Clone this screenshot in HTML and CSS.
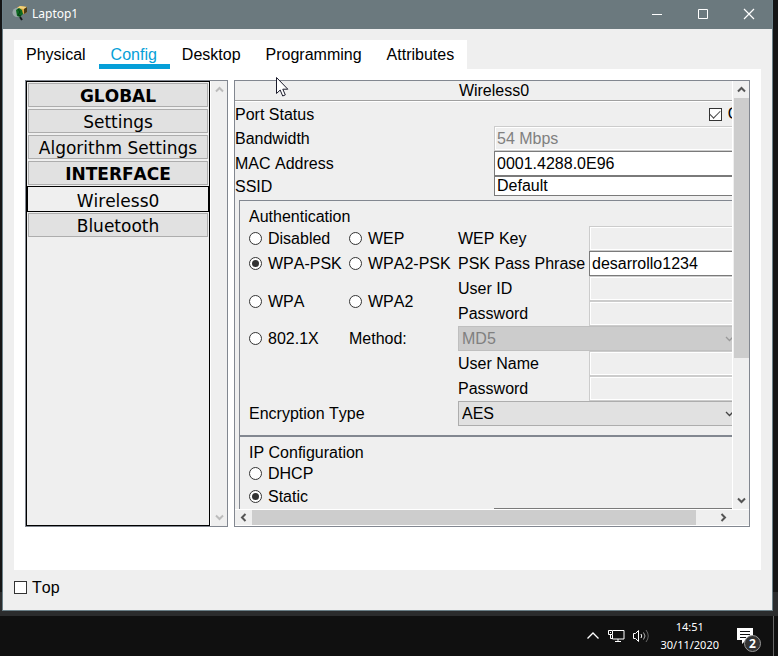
FILE: index.html
```html
<!DOCTYPE html>
<html lang="en">
<head>
<meta charset="utf-8">
<title>Laptop1</title>
<link rel="stylesheet" href="styles.css">
</head>
<body>
<div class="desktop">
  <div class="window">
    <header class="titlebar">
      <svg class="app-icon" width="16" height="16" viewBox="0 0 16 16" aria-hidden="true">
        <path d="M5 2l3-2 7 1v5l-3 2-5-2z" fill="#d9a441"/>
        <path d="M5 2l3-2 7 1-3 2z" fill="#f3d27c"/>
        <path d="M12 3l3-2v5l-3 2z" fill="#4c3a14"/>
        <circle cx="5" cy="6.500" r="4.500" fill="#9aa9a8"/>
        <path d="M4 4l3-2 3 2 1 4-3 3-3-1z" fill="#0d6a20"/>
        <path d="M6 3l2 3-2 3 3 1" stroke="#063c10" fill="none"/>
        <path d="M8 11l2 3" stroke="#15191a" stroke-width="2"/>
      </svg>
      <h1 class="window-title">Laptop1</h1>
      <div class="window-controls">
        <button type="button" aria-label="Minimize"><svg width="12" height="12" viewBox="0 0 12 12"><path d="M1 6.500h10" stroke="#fff"/></svg></button>
        <button type="button" aria-label="Maximize"><svg width="12" height="12" viewBox="0 0 12 12"><path d="M1.500 1.500h9v9h-9z" stroke="#fff" fill="none"/></svg></button>
        <button type="button" aria-label="Close"><svg width="12" height="12" viewBox="0 0 12 12"><path d="M1 1l10 10M11 1L1 11" stroke="#fff" stroke-width="1.200"/></svg></button>
      </div>
    </header>

    <main class="client">
      <nav class="tabs">
        <a href="#physical">Physical</a>
        <a href="#config" class="active">Config</a>
        <a href="#desktop">Desktop</a>
        <a href="#programming">Programming</a>
        <a href="#attributes">Attributes</a>
      </nav>

      <section class="panel">
        <aside class="sidebar">
          <div class="menu">
            <button type="button" class="heading">GLOBAL</button>
            <button type="button">Settings</button>
            <button type="button">Algorithm Settings</button>
            <button type="button" class="heading">INTERFACE</button>
            <button type="button" class="selected">Wireless0</button>
            <button type="button">Bluetooth</button>
          </div>
          <div class="scroll-y idle">
            <svg width="9" height="7" viewBox="0 0 9 7"><path d="M1 5.500l3.500-3.500 3.500 3.500"/></svg>
            <svg width="9" height="7" viewBox="0 0 9 7"><path d="M1 1.500l3.500 3.500 3.500-3.500"/></svg>
          </div>
        </aside>

        <div class="settings">
          <div class="viewport">
            <form class="form">
              <h2 class="form-title">Wireless0</h2>
              <div class="general">
                <span class="port-label">Port Status</span>
                <label class="option port-on"><input type="checkbox" checked>On</label>
                <label for="bandwidth">Bandwidth</label>
                <input id="bandwidth" type="text" value="54 Mbps" disabled>
                <label for="mac">MAC Address</label>
                <input id="mac" type="text" value="0001.4288.0E96">
                <label for="ssid">SSID</label>
                <input id="ssid" class="short" type="text" value="Default">
              </div>

              <div class="group" role="group" aria-labelledby="auth-title">
                <h3 id="auth-title">Authentication</h3>
                <div class="auth">
                  <label class="option"><input type="radio" name="auth">Disabled</label>
                  <label class="option"><input type="radio" name="auth">WEP</label>
                  <label for="wep-key">WEP Key</label>
                  <input id="wep-key" type="text" disabled>

                  <label class="option"><input type="radio" name="auth" checked>WPA-PSK</label>
                  <label class="option"><input type="radio" name="auth">WPA2-PSK</label>
                  <label for="psk">PSK Pass Phrase</label>
                  <input id="psk" type="text" value="desarrollo1234">

                  <label class="option tall"><input type="radio" name="auth">WPA</label>
                  <label class="option tall"><input type="radio" name="auth">WPA2</label>
                  <label for="user-id">User ID</label>
                  <input id="user-id" type="text" disabled>
                  <label for="user-password">Password</label>
                  <input id="user-password" type="text" disabled>

                  <label class="option"><input type="radio" name="auth">802.1X</label>
                  <label for="method">Method:</label>
                  <div class="combo">
                    <select id="method" disabled><option>MD5</option></select>
                    <svg width="9" height="6" viewBox="0 0 9 6"><path d="M1 1l3.500 3.500 3.500-3.500"/></svg>
                  </div>

                  <label class="third" for="x-name">User Name</label>
                  <input id="x-name" type="text" disabled>
                  <label class="third" for="x-password">Password</label>
                  <input id="x-password" type="text" disabled>

                  <label class="wide" for="encryption">Encryption Type</label>
                  <div class="combo">
                    <select id="encryption"><option>AES</option></select>
                    <svg width="9" height="6" viewBox="0 0 9 6"><path d="M1 1l3.500 3.500 3.500-3.500"/></svg>
                  </div>
                </div>
              </div>

              <div class="group" role="group" aria-labelledby="ip-title">
                <h3 id="ip-title">IP Configuration</h3>
                <div class="ip">
                  <label class="option"><input type="radio" name="ip">DHCP</label>
                  <label class="option"><input type="radio" name="ip" checked>Static</label>
                  <input class="ip-address" type="text" aria-labelledby="ip-title">
                </div>
              </div>
            </form>
          </div>
          <div class="scroll-y">
            <svg width="9" height="7" viewBox="0 0 9 7"><path d="M1 5.500l3.500-3.500 3.500 3.500"/></svg>
            <div class="track"><div class="thumb"></div></div>
            <svg width="9" height="7" viewBox="0 0 9 7"><path d="M1 1.500l3.500 3.500 3.500-3.500"/></svg>
          </div>
          <div class="scroll-x">
            <svg width="7" height="9" viewBox="0 0 7 9"><path d="M5.500 1l-3.500 3.500 3.500 3.500"/></svg>
            <div class="track"><div class="thumb"></div></div>
            <svg width="7" height="9" viewBox="0 0 7 9"><path d="M1.500 1l3.500 3.500-3.500 3.500"/></svg>
          </div>
        </div>
      </section>

      <footer class="bottom">
        <label class="option"><input type="checkbox">Top</label>
      </footer>
    </main>
  </div>
</div>

<footer class="taskbar">
  <svg width="14" height="14" viewBox="0 0 14 14" aria-hidden="true"><path d="M1.500 9.500L7 4l5.500 5.500" stroke="#fff" stroke-width="1.300" fill="none"/></svg>
  <svg width="17" height="14" viewBox="0 0 17 14" aria-hidden="true">
    <path d="M5 1.500h11v8.500H4.500V6M10 10v3M7 12.500h6" stroke="#fff" fill="none"/>
    <path d="M.5 1.500h4v4h-4zM2.500 5.500v4h2M2 3.500h1" stroke="#fff" fill="none"/>
  </svg>
  <svg width="17" height="14" viewBox="0 0 17 14" aria-hidden="true">
    <path d="M.5 4.500h2l3-3v11l-3-3h-2z" stroke="#fff" fill="none"/>
    <path d="M8 5q1.500 2 0 4" stroke="#fff" fill="none"/>
    <path d="M10.500 3.500q3 3.500 0 7" stroke="#aaa" fill="none"/>
    <path d="M13 1q4.500 6 0 12" stroke="#666" fill="none"/>
  </svg>
  <time class="clock" datetime="2020-11-30T14:51"><span>14:51</span><span>30/11/2020</span></time>
  <div class="notifications">
    <svg width="17" height="17" viewBox="0 0 17 17" aria-hidden="true">
      <path d="M0 0h16v12H9l-4 4v-4H0z" fill="#fff"/>
      <path d="M3 3.500h10M3 6.500h10M3 9.500h6" stroke="#101010"/>
    </svg>
    <span class="badge">2</span>
  </div>
</footer>

<svg class="pointer" width="13" height="20" viewBox="0 0 13 20" aria-hidden="true">
  <path d="M.5 .5v16l3.700-3.500 2.500 6 2.600-1.100-2.500-5.700h5z" fill="#fff" stroke="#1b1b2b"/>
</svg>
</body>
</html>
```

FILE: styles.css
```css
* {
  box-sizing: border-box;
}

body {
  margin: 0;
  height: 100vh;
  display: flex;
  flex-direction: column;
  overflow: hidden;
  background: #101010;
  color: #000;
  font: 16px/19px "Liberation Sans", Arial, sans-serif;
  font-kerning: none;
}

h1, h2, h3 {
  margin: 0;
  font-size: inherit;
  font-weight: normal;
}

button, input, select {
  margin: 0;
  font: inherit;
  font-kerning: none;
  color: inherit;
}

.desktop {
  flex: 1;
  min-height: 0;
  display: flex;
  padding: 0 5px 5px 2px;
  background: linear-gradient(#2b2c2d, #2b2c2d) bottom / 100% 24px no-repeat, #151515;
}

.window {
  flex: 1;
  min-width: 0;
  display: flex;
  flex-direction: column;
  border: 1px solid #6b8088;
  border-top: 0;
  background: #efefef;
}

/* Title bar */

.titlebar {
  display: flex;
  align-items: center;
  height: 29px;
  padding: 0 0 2px 9px;
  background: #6b797e;
  color: #fff;
}

.window-title {
  flex: 1;
  padding-left: 4px;
  font: 12px/16px "Noto Sans", "Open Sans", sans-serif;
}

.window-controls {
  display: flex;
}

.window-controls button {
  display: grid;
  place-items: center;
  width: 46px;
  height: 26px;
  padding: 0;
  border: 0;
  background: none;
}

/* Tabs and panel */

.client {
  flex: 1;
  min-height: 0;
  display: flex;
  flex-direction: column;
  align-items: stretch;
  padding: 11px 11px 0;
}

.tabs {
  display: flex;
  align-self: flex-start;
  background: #fff;
}

.tabs a {
  height: 29px;
  padding: 5px 13px 0 12px;
  border-bottom: 5px solid transparent;
  color: #000;
  text-decoration: none;
}

.tabs .active {
  border-color: #069fd8;
  color: #069fd8;
}

.panel {
  flex: 1;
  min-height: 0;
  display: flex;
  gap: 6px;
  padding: 11px 11px 43px;
  background: #fff;
}

.sidebar {
  display: flex;
  width: 203px;
  border: 1px solid #828790;
  background: #efefef;
}

.menu {
  flex: 1;
  display: flex;
  flex-direction: column;
  gap: 2px;
  padding: 1px;
  border: 1px solid #000;
  font: 17px/20px "DejaVu Sans", Verdana, sans-serif;
}

.menu button {
  height: 24px;
  padding: 1px 0 0;
  border: 1px solid #adadad;
  background: #e1e1e1;
  white-space: nowrap;
}

.menu .heading {
  font-weight: bold;
}

.menu .selected {
  height: 26px;
  margin: -1px;
  padding-top: 3px;
  border-color: #000;
  background: #efefef;
}

/* Scroll bars */

.scroll-y,
.scroll-x {
  display: flex;
  align-items: center;
  justify-content: space-between;
  background: #efefef;
}

.scroll-y {
  flex-direction: column;
  width: 17px;
  padding: 5px 0;
  border-left: 1px solid #fff;
}

.scroll-x {
  grid-column: 1 / -1;
  height: 17px;
  padding: 0 22px 0 5px;
  border-top: 1px solid #fff;
  border-bottom: 1px solid #fff;
}

.scroll-y svg,
.scroll-x svg {
  flex: none;
  fill: none;
  stroke: #555;
  stroke-width: 2;
}

.idle svg {
  stroke: #bcbcbc;
}

.track {
  flex: 1;
}

.scroll-y .track {
  width: 15px;
  margin: 5px 0;
}

.scroll-x .track {
  height: 15px;
  margin: 0 5px;
}

.thumb {
  background: #cdcdcd;
}

.scroll-y .thumb {
  height: 66%;
}

.scroll-x .thumb {
  width: 96%;
  height: 100%;
}

/* Settings form */

.settings {
  flex: 1;
  min-width: 0;
  display: grid;
  grid-template-columns: minmax(0, 1fr) auto;
  grid-template-rows: minmax(0, 1fr) auto;
  border: 1px solid #828790;
  background: #efefef;
}

.viewport {
  overflow: hidden;
}

.form {
  min-width: 518px;
}

.form-title {
  height: 21px;
  border-bottom: 1px solid #fff;
  box-shadow: inset 0 -1px #a0a0a0;
  text-align: center;
}

.general {
  display: grid;
  grid-template-columns: 259px 1fr;
  align-items: center;
}

.port-label,
.port-on {
  height: 24px;
  line-height: 26px;
}

.port-on {
  justify-self: end;
  padding-right: 4px;
}

input[type="text"] {
  width: 100%;
  min-width: 0;
  height: 25px;
  padding: 0 2px;
  border: 1px solid #7a7a7a;
  border-radius: 0;
  background: #fff;
}

input[type="text"]:disabled {
  border-color: #ccc;
  box-shadow: inset 0 0 0 1px #fff;
  background: #efefef;
  color: #808080;
}

input.short {
  height: 20px;
}

.option {
  display: flex;
  align-items: center;
  gap: 6px;
  white-space: nowrap;
}

.bottom .option {
  gap: 5px;
}

input[type="radio"],
input[type="checkbox"] {
  appearance: none;
  flex: none;
  display: grid;
  place-items: center;
  width: 13px;
  height: 13px;
  border: 1px solid #333;
  background: #fff;
}

input[type="radio"] {
  border-radius: 50%;
}

input[type="radio"]:checked::before {
  content: "";
  width: 7px;
  height: 7px;
  border-radius: 50%;
  background: #333;
}

input[type="checkbox"]:checked::before {
  content: "";
  width: 9px;
  height: 5px;
  margin-bottom: 3px;
  border: solid #444;
  border-width: 0 0 1px 1px;
  transform: rotate(-45deg);
}

.group {
  margin: 0 4px;
  padding: 6px 9px 9px;
  border: 1px solid #828790;
}

.general + .group {
  margin-top: 4px;
}

.auth {
  display: grid;
  grid-template-columns: 100px 109px 131px 1fr;
  grid-auto-rows: 25px;
  align-items: center;
  white-space: nowrap;
}

.tall {
  grid-row: span 2;
}

.third {
  grid-column: 3;
}

.wide {
  grid-column: span 2;
}

.combo {
  grid-column: span 2;
  display: grid;
  align-items: center;
}

.combo select,
.combo svg {
  grid-area: 1 / 1;
}

.combo select {
  appearance: none;
  width: 100%;
  height: 25px;
  padding: 0 3px;
  border: 1px solid #adadad;
  border-radius: 0;
  background: #e1e1e1;
}

.combo svg {
  justify-self: end;
  margin-right: 5px;
  fill: none;
  stroke: #444;
  stroke-width: 1.3;
  pointer-events: none;
}

.combo select:disabled {
  border-color: #bfbfbf;
  background: #ccc;
  color: #808080;
  opacity: 1;
}

.combo select:disabled + svg {
  stroke: #999;
}

.ip {
  display: grid;
  grid-template-columns: 245px 1fr;
  grid-auto-rows: 23px;
}

.ip .option {
  grid-column: 1;
}

.ip .ip-address {
  grid-row: 3;
  grid-column: 2;
}

.bottom {
  height: 40px;
  display: flex;
  align-items: center;
  padding-bottom: 5px;
}

/* Taskbar */

.taskbar {
  flex: none;
  display: flex;
  align-items: center;
  justify-content: flex-end;
  gap: 8px;
  height: 40px;
  margin-right: 4px;
  padding-right: 19px;
  border-right: 1px solid #666;
  background: #101010;
  color: #fff;
}

.clock {
  display: flex;
  flex-direction: column;
  padding: 0 10px 0 2px;
  text-align: center;
  font: 11px/18px "Noto Sans", sans-serif;
}

.notifications {
  position: relative;
  display: flex;
}

.badge {
  position: absolute;
  top: 7px;
  left: 7px;
  width: 17px;
  height: 17px;
  border: 1px solid #999;
  border-radius: 50%;
  background: #333;
  font: bold 12px/15px "Open Sans", sans-serif;
  text-align: center;
}

.pointer {
  position: absolute;
  top: 77px;
  left: 276px;
}
```
